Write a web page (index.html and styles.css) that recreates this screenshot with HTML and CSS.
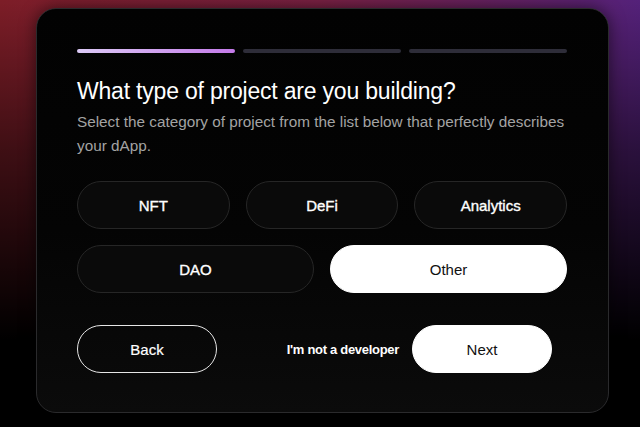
FILE: index.html
```html
<!DOCTYPE html>
<html lang="en">
<head>
<meta charset="utf-8">
<title>Project type</title>
<link rel="stylesheet" href="styles.css">
</head>
<body>
<main class="card">
  <div class="progress">
    <span class="step active"></span>
    <span class="step"></span>
    <span class="step"></span>
  </div>
  <h1 class="title">What type of project are you building?</h1>
  <p class="subtitle">Select the category of project from the list below that perfectly describes your dApp.</p>
  <div class="options three">
    <button class="option">NFT</button>
    <button class="option">DeFi</button>
    <button class="option">Analytics</button>
  </div>
  <div class="options two">
    <button class="option">DAO</button>
    <button class="option selected">Other</button>
  </div>
  <div class="actions">
    <button class="btn back">Back</button>
    <div class="right">
      <a class="skip">I'm not a developer</a>
      <button class="btn next">Next</button>
    </div>
  </div>
</main>
</body>
</html>
```
FILE: styles.css
```css
* { box-sizing: border-box; }
html, body { margin: 0; height: 100%; }
body {
  font-family: "Liberation Sans", Arial, sans-serif;
  background:
    linear-gradient(to bottom, rgba(0,0,0,0) 0px, rgba(0,0,0,0.5) 150px, #000 340px),
    linear-gradient(90deg, #7d1d27 0%, #7b2144 50%, #54217a 100%);
  padding: 8px 31px 0 36px;
  overflow: hidden;
}
.card {
  width: 573px;
  height: 405px;
  border: 1px solid #2a2a2c;
  border-radius: 20px;
  background: linear-gradient(to bottom, #020202 0%, #040404 55%, #0b0b0b 100%);
  box-shadow: 0 0 16px rgba(0,0,0,0.55);
  padding: 40px 41px 0 40px;
  color: #fff;
}
.progress { display: flex; gap: 8px; }
.step { flex: 1; height: 4px; border-radius: 2px; background: #2e2d39; }
.step.active { background: linear-gradient(90deg, #dccaf6, #c47ae9); }
.title {
  margin: 23px 0 0;
  font-size: 23px;
  font-weight: 400;
  line-height: 30px;
  letter-spacing: -0.2px;
}
.subtitle {
  margin: 4px 0 0;
  font-size: 15.3px;
  line-height: 24px;
  color: #a3a3a3;
}
.options { display: grid; gap: 16px; margin-top: 16px; }
.options.three { grid-template-columns: repeat(3, 1fr); margin-top: 23px; }
.options.two { grid-template-columns: repeat(2, 1fr); }
.option {
  height: 48px;
  border-radius: 24px;
  border: 1px solid #262626;
  background: #0a0a0a;
  color: #fff;
  font-family: inherit;
  font-size: 15px;
  font-weight: 400;
  -webkit-text-stroke: 0.35px #fff;
}
.option.selected { background: #fff; color: #111; border-color: #fff; -webkit-text-stroke: 0; }
.actions { display: flex; justify-content: space-between; align-items: center; margin-top: 32px; padding-right: 15px; }
.right { display: flex; align-items: center; gap: 13px; }
.btn {
  width: 140px;
  height: 48px;
  border-radius: 24px;
  font-family: inherit;
  font-size: 15px;
}
.back { background: transparent; border: 1px solid #e6e6e6; color: #fff; -webkit-text-stroke: 0.2px #fff; }
.next { background: #fff; border: 1px solid #fff; color: #111; }
.skip { font-size: 13px; font-weight: 700; color: #fff; letter-spacing: -0.3px; }
```
